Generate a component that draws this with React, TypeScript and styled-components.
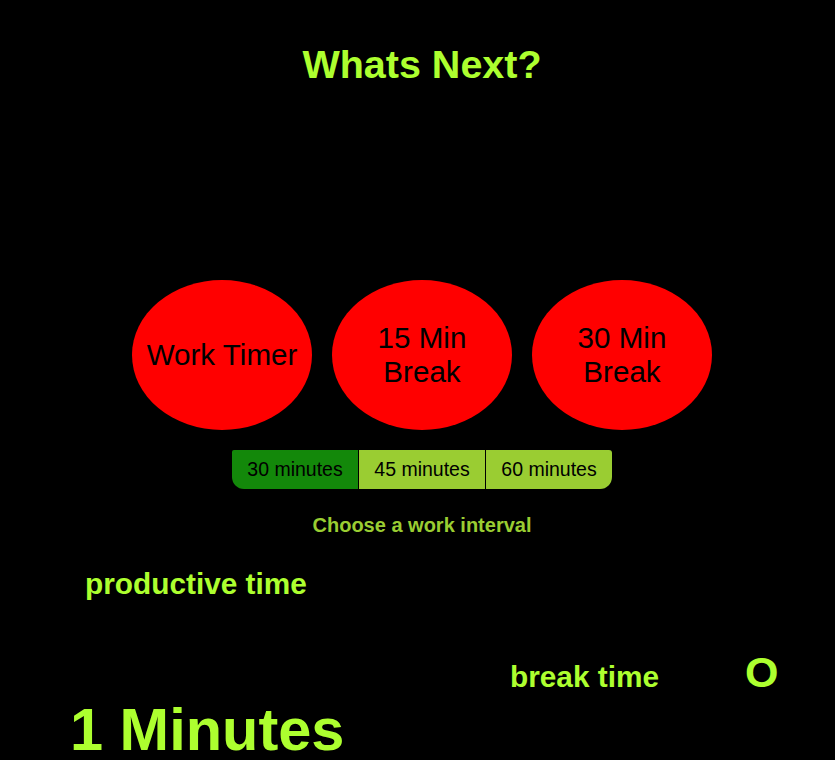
import React, { useState } from "react";
import styled, { createGlobalStyle } from "styled-components";

const GlobalStyle = createGlobalStyle`
  body {
    margin: 0;
    background-color: #000;
    font-family: "Liberation Sans", Arial, sans-serif;
  }
`;

const Page = styled.div`
  min-height: 760px;
  padding: 0 0 40px 9px;
  background-color: #000;
`;

const Title = styled.h1`
  margin: 45px 0 0;
  font-size: 39.5px;
  line-height: 1;
  font-weight: 700;
  color: #adff2f;
  text-align: center;
`;

const TimerRow = styled.div`
  display: flex;
  justify-content: center;
  gap: 20px;
  margin-top: 195.5px;
`;

const TimerButton = styled.button`
  width: 180px;
  height: 150px;
  border: none;
  border-radius: 50%;
  background-color: #ff0000;
  color: #000;
  font-family: "Liberation Sans", Arial, sans-serif;
  font-size: 29.6px;
  line-height: 34px;
  padding: 0 8px;
  display: flex;
  align-items: center;
  justify-content: center;
  text-align: center;
  cursor: pointer;
`;

const ShortLabel = styled.span`
  max-width: 110px;
`;

const IntervalBar = styled.div`
  display: flex;
  width: 380px;
  height: 39px;
  margin: 20px auto 0;
  border-radius: 2px 3px 12px 12px;
  overflow: hidden;
`;

const IntervalTab = styled.button<{ $active: boolean }>`
  flex: 1;
  border: none;
  border-left: 1px solid #000;
  background-color: ${(props) => (props.$active ? "#13880a" : "#9acd32")};
  color: #000;
  font-family: "Liberation Sans", Arial, sans-serif;
  font-size: 19.5px;
  padding: 0;
  cursor: pointer;
  &:first-child {
    border-left: none;
  }
`;

const Hint = styled.p`
  margin: 26px 0 0;
  font-size: 20px;
  line-height: 1;
  font-weight: 700;
  color: #9acd32;
  text-align: center;
`;

const Label = styled.div<{ $offset: number }>`
  margin-left: ${(props) => props.$offset}px;
  font-size: 29.8px;
  line-height: 1;
  font-weight: 700;
  color: #adff2f;
`;

const BreakRow = styled.div`
  display: flex;
  align-items: baseline;
  gap: 86px;
  margin: 52px 0 0 501px;
`;

const BreakCount = styled.span`
  font-size: 43px;
  line-height: 1;
  font-weight: 700;
  color: #adff2f;
`;

const Total = styled.div`
  margin: 6px 0 0 61px;
  font-size: 59.5px;
  line-height: 1;
  font-weight: 700;
  color: #adff2f;
`;

const intervals = [30, 45, 60];

const App: React.FC = () => {
  const [interval, setInterval] = useState<number>(30);

  return (
    <Page>
      <GlobalStyle />
      <Title>Whats Next?</Title>
      <TimerRow>
        <TimerButton>Work Timer</TimerButton>
        <TimerButton>
          <ShortLabel>15 Min Break</ShortLabel>
        </TimerButton>
        <TimerButton>
          <ShortLabel>30 Min Break</ShortLabel>
        </TimerButton>
      </TimerRow>
      <IntervalBar>
        {intervals.map((mins) => (
          <IntervalTab
            key={mins}
            $active={interval === mins}
            onClick={() => setInterval(mins)}
          >
            {mins} minutes
          </IntervalTab>
        ))}
      </IntervalBar>
      <Hint>Choose a work interval</Hint>
      <Label $offset={76} style={{ marginTop: 34 }}>
        productive time
      </Label>
      <BreakRow>
        <Label $offset={0}>break time</Label>
        <BreakCount>O</BreakCount>
      </BreakRow>
      <Total>1 Minutes</Total>
    </Page>
  );
};

export default App;
